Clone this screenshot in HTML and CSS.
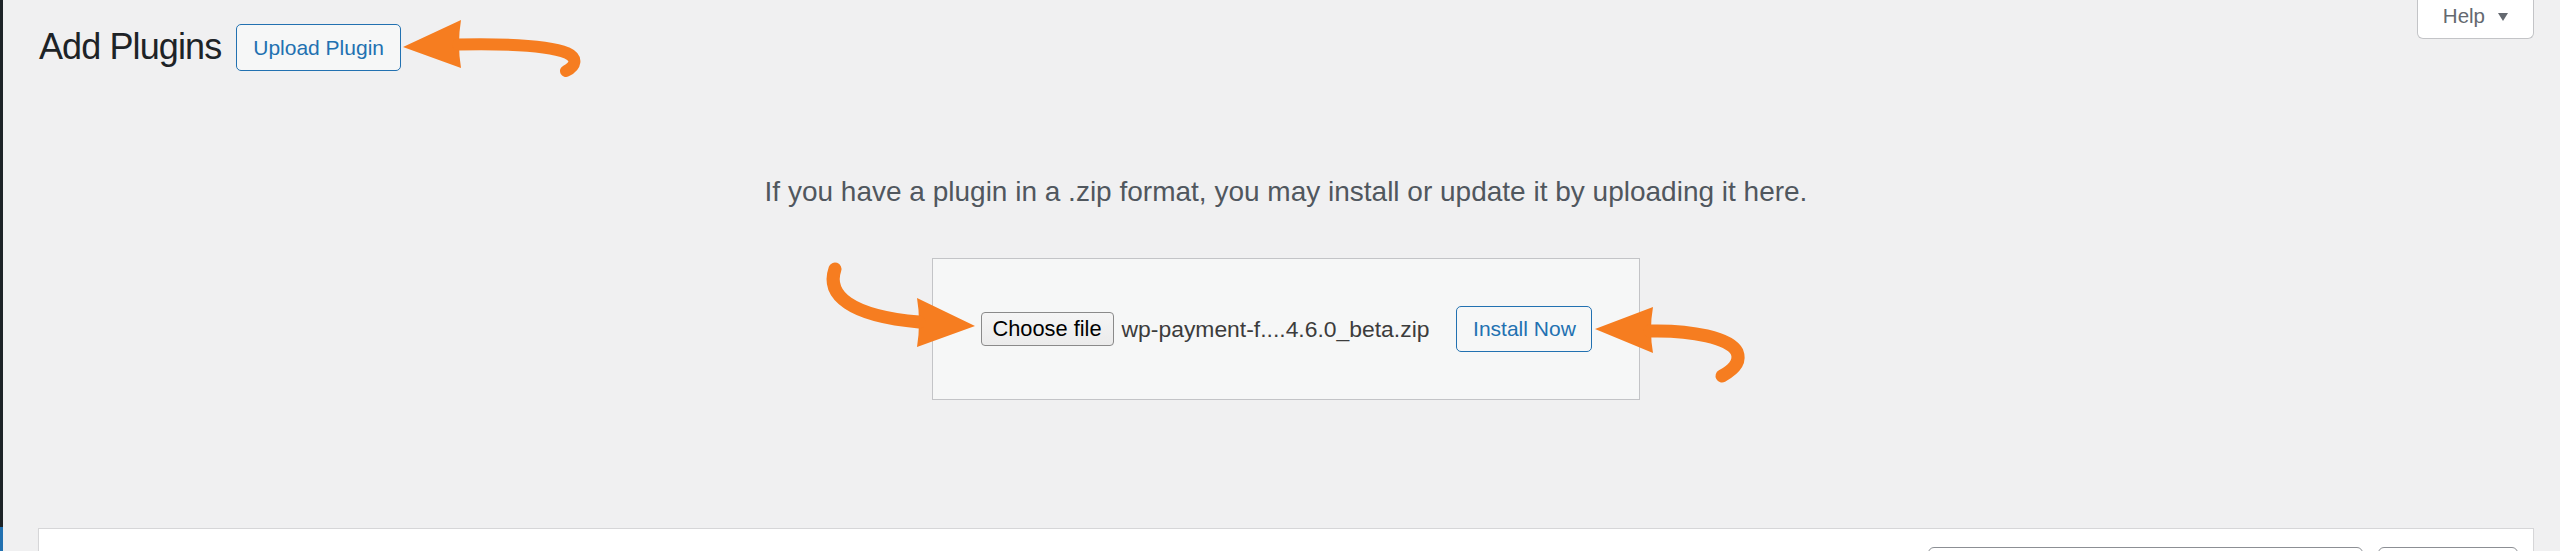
FILE: index.html
```html
<!DOCTYPE html>
<html lang="en">
<head>
<meta charset="utf-8">
<title>Add Plugins</title>
<link rel="stylesheet" href="styles.css">
</head>
<body>
<div class="page">
  <aside class="adminmenu">
    <div class="menu-fill"></div>
    <div class="menu-current"></div>
  </aside>
  <main class="main">
    <div class="help-tab"><span class="help-label">Help</span><span class="help-caret"></span></div>
    <div class="title-row">
      <h1 class="title">Add Plugins</h1>
      <a class="title-action">Upload Plugin</a>
    </div>
    <p class="install-help">If you have a plugin in a .zip format, you may install or update it by uploading it here.</p>
    <div class="upload-wrap">
      <form class="upload-form">
        <span class="file-input">
          <span class="file-btn">Choose file</span>
          <span class="file-name">wp-payment-f....4.6.0_beta.zip</span>
        </span>
        <button type="button" class="install-btn">Install Now</button>
      </form>
    </div>
    <div class="filter-bar">
      <div class="search-field"></div>
      <div class="search-btn"></div>
    </div>
  </main>
  <svg class="annotations" width="2560" height="551" viewBox="0 0 2560 551" xmlns="http://www.w3.org/2000/svg">
    <g fill="#f67d20" stroke="none">
      <path d="M403 47 L461 20 Q457 44 461 68 Z"/>
      <path d="M975 326 L917 298 Q921 322 917 347 Z"/>
      <path d="M1595 329 L1653 307 Q1649 330 1653 353 Z"/>
    </g>
    <g fill="none" stroke="#f67d20" stroke-linecap="round" stroke-linejoin="round">
      <path stroke-width="12" d="M458 44.5 C508 43.5 550 46 567 53 C578 58 576 66 566 71"/>
      <path stroke-width="13" d="M835 269 C826 295 850 316 919 322"/>
      <path stroke-width="13" d="M1650 331 C1692 330 1730 338 1737 352 C1741 362 1733 370 1722 376"/>
    </g>
  </svg>
</div>
</body>
</html>
```

FILE: styles.css
```css
html, body {
  margin: 0;
  padding: 0;
  height: 100%;
  overflow: hidden;
  background: #f0f0f1;
}

body {
  font-family: "Liberation Sans", Arial, sans-serif;
  color: #3c434a;
}

.page {
  position: relative;
  display: flex;
  height: 551px;
  overflow: hidden;
}

.adminmenu {
  width: 3px;
  flex: none;
  display: flex;
  flex-direction: column;
}

.menu-fill {
  flex: 1;
  background: #1d2327;
}

.menu-current {
  height: 24px;
  background: #2271b1;
}

.main {
  flex: 1;
  min-width: 0;
  padding: 0 26px 0 35px;
}

/* Help tab */
.help-tab {
  float: right;
  display: flex;
  align-items: flex-start;
  box-sizing: border-box;
  height: 39px;
  padding: 4px 25px 0 25px;
  background: #fff;
  border: 1px solid #c3c4c7;
  border-top: none;
  border-radius: 0 0 6px 6px;
  color: #646970;
  font-size: 20.5px;
  line-height: 24px;
}

.help-caret {
  width: 0;
  height: 0;
  margin: 9px 0 0 13px;
  border-left: 5.5px solid transparent;
  border-right: 5.5px solid transparent;
  border-top: 8px solid #646970;
}

/* Title */
.title-row {
  display: flex;
  align-items: center;
  margin-top: 24px;
}

.title {
  margin: 0 0 2px 1px;
  font-size: 36px;
  font-weight: 400;
  line-height: 45px;
  letter-spacing: -0.9px;
  color: #1d2327;
}

.title-action {
  display: flex;
  align-items: center;
  box-sizing: border-box;
  height: 47px;
  margin-left: 15px;
  padding: 0 16px;
  border: 1px solid #2271b1;
  border-radius: 5px;
  background: #f6f7f7;
  color: #2271b1;
  font-size: 21px;
  text-decoration: none;
}

/* Install help */
.install-help {
  margin: 105px 0 0;
  text-align: center;
  font-size: 28px;
  line-height: 32px;
  color: #50575e;
}

/* Upload form */
.upload-wrap {
  display: flex;
  justify-content: center;
  margin-top: 50px;
}

.upload-form {
  display: flex;
  align-items: center;
  margin: 0;
  padding: 47px 47px 47px 48px;
  background: #f6f7f7;
  border: 1px solid #c3c4c7;
}

.file-input {
  display: flex;
  align-items: center;
}

.file-btn {
  display: flex;
  align-items: center;
  justify-content: center;
  box-sizing: border-box;
  width: 133px;
  height: 34px;
  border: 1px solid #8a8a8a;
  border-radius: 4px;
  background: linear-gradient(#f5f5f5, #ebebeb);
  color: #000;
  font-size: 21.8px;
}

.file-name {
  margin-left: 8px;
  font-size: 22.9px;
  color: #3c3c3c;
  white-space: nowrap;
}

.install-btn {
  display: flex;
  align-items: center;
  justify-content: center;
  box-sizing: border-box;
  width: 136px;
  height: 46px;
  margin-left: 27px;
  padding: 0;
  border: 1px solid #2271b1;
  border-radius: 5px;
  background: #f6f7f7;
  color: #2271b1;
  font-family: "Liberation Sans", Arial, sans-serif;
  font-size: 21px;
}

/* Filter bar */
.filter-bar {
  display: flex;
  justify-content: flex-end;
  gap: 15px;
  box-sizing: border-box;
  height: 120px;
  margin-top: 128px;
  padding: 18px 15px 0;
  background: #fff;
  border: 1px solid #d6d6d8;
  box-shadow: 0 1px 1px rgba(0, 0, 0, 0.04);
}

.search-field {
  width: 435px;
  height: 50px;
  box-sizing: border-box;
  border: 1px solid #8c8f94;
  border-radius: 6px;
  background: #fff;
}

.search-btn {
  width: 140px;
  height: 50px;
  box-sizing: border-box;
  border: 1px solid #8c8f94;
  border-radius: 6px;
  background: #fff;
}

/* Annotation overlay */
.annotations {
  position: absolute;
  top: 0;
  left: 0;
  pointer-events: none;
}
```
